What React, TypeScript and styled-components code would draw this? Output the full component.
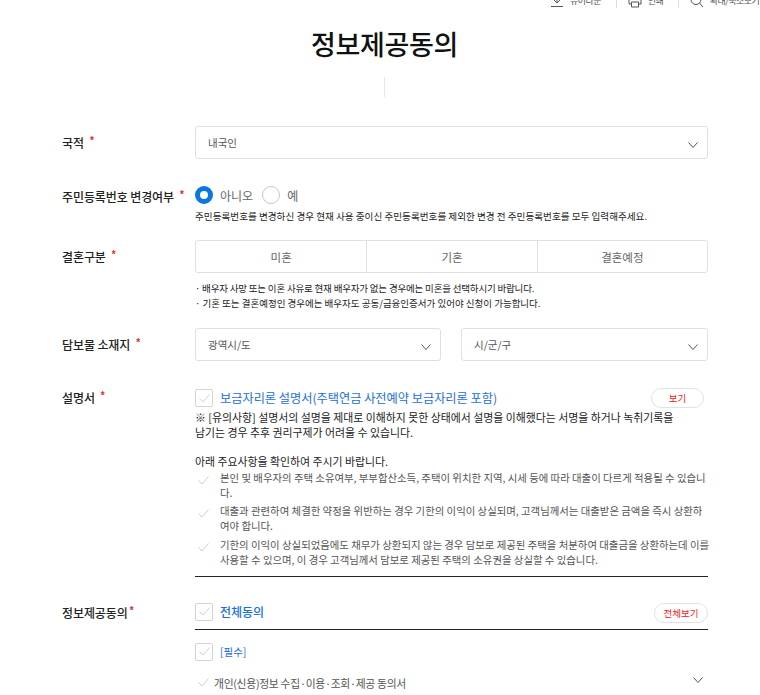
import React from 'react';
import styled, { createGlobalStyle } from 'styled-components';

const GlobalStyle = createGlobalStyle`
  html, body {
    margin: 0;
    padding: 0;
    background: #fff;
    overflow: hidden;
    font-family: 'Noto Sans CJK KR', 'Noto Sans', sans-serif;
    color: #222;
  }
`;

const Page = styled.div`
  width: 760px;
  height: 695px;
  overflow: hidden;
`;

const Toolbar = styled.div`
  height: 8px;
  padding-left: 550px;
  display: flex;
  align-items: flex-end;
  overflow: hidden;
  white-space: nowrap;
`;

const ToolItem = styled.div`
  display: flex;
  flex-shrink: 0;
  align-items: center;
  gap: 6px;
  height: 14px;
  padding-right: 14.5px;
  font-size: 9px;
  letter-spacing: -0.5px;
  line-height: 14px;
  color: #555;
  & + & {
    padding-left: 11px;
    border-left: 1px solid #ddd;
  }
`;

const Title = styled.h1`
  margin: 13px 0 0 9px;
  font-size: 27px;
  line-height: 46px;
  font-weight: 500;
  color: #111;
  text-align: center;
  letter-spacing: -0.3px;
`;

const Divider = styled.div`
  width: 1px;
  height: 20px;
  margin: 10px 0 0 384px;
  background: #e6e6e6;
`;

const Form = styled.div`
  margin-top: 29px;
  padding: 0 52px 0 62px;
`;

const Row = styled.div<{ $gap?: number }>`
  display: grid;
  grid-template-columns: 133px 513px;
  margin-bottom: ${p => p.$gap ?? 0}px;
`;

const Label = styled.div<{ $top?: number }>`
  padding-top: ${p => p.$top ?? 0}px;
  font-size: 12px;
  line-height: 18px;
  font-weight: 500;
  color: #222;
  white-space: nowrap;
  letter-spacing: -0.1px;
`;

const Star = styled.span<{ $gap: number }>`
  display: inline-block;
  margin-left: ${p => p.$gap}px;
  color: #ee1c25;
  font-family: 'Liberation Sans', sans-serif;
  font-size: 10px;
  line-height: 10px;
  vertical-align: 4px;
  font-weight: 700;
`;

const SelectBox = styled.div`
  height: 33px;
  box-sizing: border-box;
  padding: 0 9px 0 12px;
  border: 1px solid #e0e0e0;
  border-radius: 3px;
  display: flex;
  align-items: center;
  justify-content: space-between;
  font-size: 10.5px;
  color: #555;
`;

const SelectRow = styled.div`
  display: grid;
  grid-template-columns: 246px 247px;
  gap: 20px;
`;

const RadioRow = styled.div`
  display: flex;
  align-items: center;
  height: 20px;
  font-size: 12px;
  color: #666;
`;

const Radio = styled.span<{ $on?: boolean }>`
  width: 18px;
  height: 18px;
  box-sizing: border-box;
  border-radius: 50%;
  border: ${p => (p.$on ? '5px solid #0b76e0' : '1px solid #c9c9c9')};
  margin-right: 7px;
`;

const RadioText = styled.span`
  margin-right: 9px;
`;

const Help = styled.div`
  margin-top: 4px;
  font-size: 9.6px;
  line-height: 15px;
  color: #222;
  white-space: nowrap;
`;

const Segments = styled.div`
  display: grid;
  grid-template-columns: repeat(3, 1fr);
  height: 33px;
  box-sizing: border-box;
  border: 1px solid #e0e0e0;
  border-radius: 3px;
`;

const Segment = styled.div`
  display: flex;
  align-items: center;
  justify-content: center;
  font-size: 11.5px;
  color: #666;
  & + & {
    border-left: 1px solid #e0e0e0;
  }
`;

const Bullets = styled.div`
  margin-top: 8px;
`;

const Bullet = styled.div<{ $tight?: boolean }>`
  font-size: 9.5px;
  line-height: 15px;
  color: #222;
  white-space: nowrap;
  letter-spacing: ${p => (p.$tight ? '-0.18px' : '0')};
`;

const CheckHead = styled.div`
  display: flex;
  align-items: center;
  justify-content: space-between;
  height: 20px;
`;

const CheckLeft = styled.div`
  display: flex;
  align-items: center;
  gap: 7px;
`;

const CheckBox = styled.span`
  width: 18px;
  height: 18px;
  box-sizing: border-box;
  border: 1px solid #d4d4d4;
  border-radius: 2px;
  display: flex;
  align-items: center;
  justify-content: center;
`;

const BlueText = styled.span<{ $size?: number; $bold?: boolean }>`
  color: #1a6fdc;
  font-size: ${p => p.$size ?? 12.2}px;
  font-weight: ${p => (p.$bold ? 500 : 400)};
  white-space: nowrap;
`;

const PillButton = styled.span<{ $width: number; $right?: number }>`
  width: ${p => p.$width}px;
  height: 20px;
  box-sizing: border-box;
  margin-right: ${p => p.$right ?? 0}px;
  border: 1px solid #e2e2e2;
  border-radius: 10px;
  display: flex;
  align-items: center;
  justify-content: center;
  font-size: 9.5px;
  color: #ee1c25;
`;

const Notice = styled.div`
  margin-top: 1.5px;
  font-size: 10.9px;
  line-height: 15px;
  color: #222;
  white-space: nowrap;
`;

const NoticeLead = styled.div`
  margin-top: 13.5px;
  font-size: 10.9px;
  line-height: 16px;
  color: #222;
`;

const CheckList = styled.ul`
  list-style: none;
  margin: 0;
  padding: 0.5px 0 9px;
  border-bottom: 1px solid #222;
`;

const CheckItem = styled.li`
  display: grid;
  grid-template-columns: 25px 1fr;
  font-size: 10.4px;
  line-height: 15px;
  color: #555;
  white-space: nowrap;
  & + & {
    margin-top: 3.5px;
  }
`;

const ItemLine = styled.div``;

const TickCell = styled.span`
  padding: 3px 0 0 3px;
`;

const AgreeHead = styled(CheckHead)`
  height: 26px;
  box-sizing: content-box;
  align-items: flex-start;
  border-bottom: 1px solid #222;
`;

const Required = styled(CheckLeft)`
  margin-top: 13px;
`;

const Consent = styled.div`
  display: flex;
  align-items: flex-start;
  justify-content: space-between;
  margin-top: 13px;
  font-size: 10.8px;
  line-height: 18px;
  letter-spacing: -0.3px;
  color: #555;
`;

const ConsentLabel = styled.div`
  display: flex;
  align-items: center;
  gap: 5px;
  padding-left: 3px;
`;

const ConsentChevron = styled.span`
  display: flex;
  margin-right: 5px;
  padding-top: 3px;
`;

const ChevronWrap = styled.span`
  display: flex;
  margin-top: 4px;
`;

const Chevron: React.FC = () => (
  <svg width="10" height="6" viewBox="0 0 10 6" fill="none" stroke="#555" strokeWidth="1">
    <path d="M0.5 0.5 L5 5.5 L9.5 0.5" />
  </svg>
);

const Tick: React.FC = () => (
  <svg width="11" height="9" viewBox="0 0 11 9" fill="none" stroke="#cfcfcf" strokeWidth="1">
    <path d="M0.5 4.5 L4 8 L10.5 0.5" />
  </svg>
);

const DownloadIcon = () => (
  <svg width="14" height="14" viewBox="0 0 14 14" fill="none" stroke="#555" strokeWidth="1">
    <path d="M7 0 V9 M3.5 5.5 L7 9 L10.5 5.5 M1 12.5 H13" />
  </svg>
);

const PrintIcon = () => (
  <svg width="14" height="14" viewBox="0 0 14 14" fill="none" stroke="#555" strokeWidth="1">
    <path d="M3.5 4 V0.5 H10.5 V4 M3.5 10 H1 V4 H13 V10 H10.5 M3.5 8 H10.5 V13 H3.5 Z" />
  </svg>
);

const SearchIcon = () => (
  <svg width="14" height="14" viewBox="0 0 14 14" fill="none" stroke="#555" strokeWidth="1">
    <circle cx="6" cy="5.5" r="5" />
    <path d="M9.5 9 L13 13" />
  </svg>
);

const items = [
  ['본인 및 배우자의 주택 소유여부, 부부합산소득, 주택이 위치한 지역, 시세 등에 따라 대출이 다르게 적용될 수 있습니', '다.'],
  ['대출과 관련하여 체결한 약정을 위반하는 경우 기한의 이익이 상실되며, 고객님께서는 대출받은 금액을 즉시 상환하', '여야 합니다.'],
  ['기한의 이익이 상실되었음에도 채무가 상환되지 않는 경우 담보로 제공된 주택을 처분하여 대출금을 상환하는데 이를', '사용할 수 있으며, 이 경우 고객님께서 담보로 제공된 주택의 소유권을 상실할 수 있습니다.'],
];

export default function App() {
  return (
    <Page>
      <GlobalStyle />
      <Toolbar>
        <ToolItem><DownloadIcon />뷰어다운</ToolItem>
        <ToolItem><PrintIcon />인쇄</ToolItem>
        <ToolItem><SearchIcon />확대/축소보기</ToolItem>
      </Toolbar>
      <Title>정보제공동의</Title>
      <Divider />
      <Form>
        <Row $gap={26}>
          <Label $top={8}>국적<Star $gap={6}>*</Star></Label>
          <SelectBox>내국인<ChevronWrap><Chevron /></ChevronWrap></SelectBox>
        </Row>
        <Row $gap={16}>
          <Label $top={3}>주민등록번호 변경여부<Star $gap={6}>*</Star></Label>
          <div>
            <RadioRow>
              <Radio $on />
              <RadioText>아니오</RadioText>
              <Radio />
              <RadioText>예</RadioText>
            </RadioRow>
            <Help>주민등록번호를 변경하신 경우 현재 사용 중이신 주민등록번호를 제외한 변경 전 주민등록번호를 모두 입력해주세요.</Help>
          </div>
        </Row>
        <Row $gap={17}>
          <Label $top={8}>결혼구분<Star $gap={6}>*</Star></Label>
          <div>
            <Segments>
              <Segment>미혼</Segment>
              <Segment>기혼</Segment>
              <Segment>결혼예정</Segment>
            </Segments>
            <Bullets>
              <Bullet $tight>· 배우자 사망 또는 이혼 사유로 현재 배우자가 없는 경우에는 미혼을 선택하시기 바랍니다.</Bullet>
              <Bullet>· 기혼 또는 결혼예정인 경우에는 배우자도 공동/금융인증서가 있어야 신청이 가능합니다.</Bullet>
            </Bullets>
          </div>
        </Row>
        <Row $gap={27}>
          <Label $top={8}>담보물 소재지<Star $gap={6}>*</Star></Label>
          <SelectRow>
            <SelectBox>광역시/도<ChevronWrap><Chevron /></ChevronWrap></SelectBox>
            <SelectBox>시/군/구<ChevronWrap><Chevron /></ChevronWrap></SelectBox>
          </SelectRow>
        </Row>
        <Row $gap={26}>
          <Label $top={1}>설명서<Star $gap={6}>*</Star></Label>
          <div>
            <CheckHead>
              <CheckLeft>
                <CheckBox><Tick /></CheckBox>
                <BlueText>보금자리론 설명서(주택연금 사전예약 보금자리론 포함)</BlueText>
              </CheckLeft>
              <PillButton $width={53} $right={4}>보기</PillButton>
            </CheckHead>
            <Notice>
              ※ [유의사항] 설명서의 설명을 제대로 이해하지 못한 상태에서 설명을 이해했다는 서명을 하거나 녹취기록을<br />
              남기는 경우 추후 권리구제가 어려울 수 있습니다.
            </Notice>
            <NoticeLead>아래 주요사항을 확인하여 주시기 바랍니다.</NoticeLead>
            <CheckList>
              {items.map(lines => (
                <CheckItem key={lines[0]}>
                  <TickCell><Tick /></TickCell>
                  <div>
                    {lines.map(line => <ItemLine key={line}>{line}</ItemLine>)}
                  </div>
                </CheckItem>
              ))}
            </CheckList>
          </div>
        </Row>
        <Row>
          <Label $top={1}>정보제공동의<Star $gap={2}>*</Star></Label>
          <div>
            <AgreeHead>
              <CheckLeft>
                <CheckBox><Tick /></CheckBox>
                <BlueText $size={12} $bold>전체동의</BlueText>
              </CheckLeft>
              <PillButton $width={54}>전체보기</PillButton>
            </AgreeHead>
            <Required>
              <CheckBox><Tick /></CheckBox>
              <BlueText $size={10.5}>[필수]</BlueText>
            </Required>
            <Consent>
              <ConsentLabel><Tick />개인(신용)정보 수집·이용·조회·제공 동의서</ConsentLabel>
              <ConsentChevron><Chevron /></ConsentChevron>
            </Consent>
          </div>
        </Row>
      </Form>
    </Page>
  );
}
